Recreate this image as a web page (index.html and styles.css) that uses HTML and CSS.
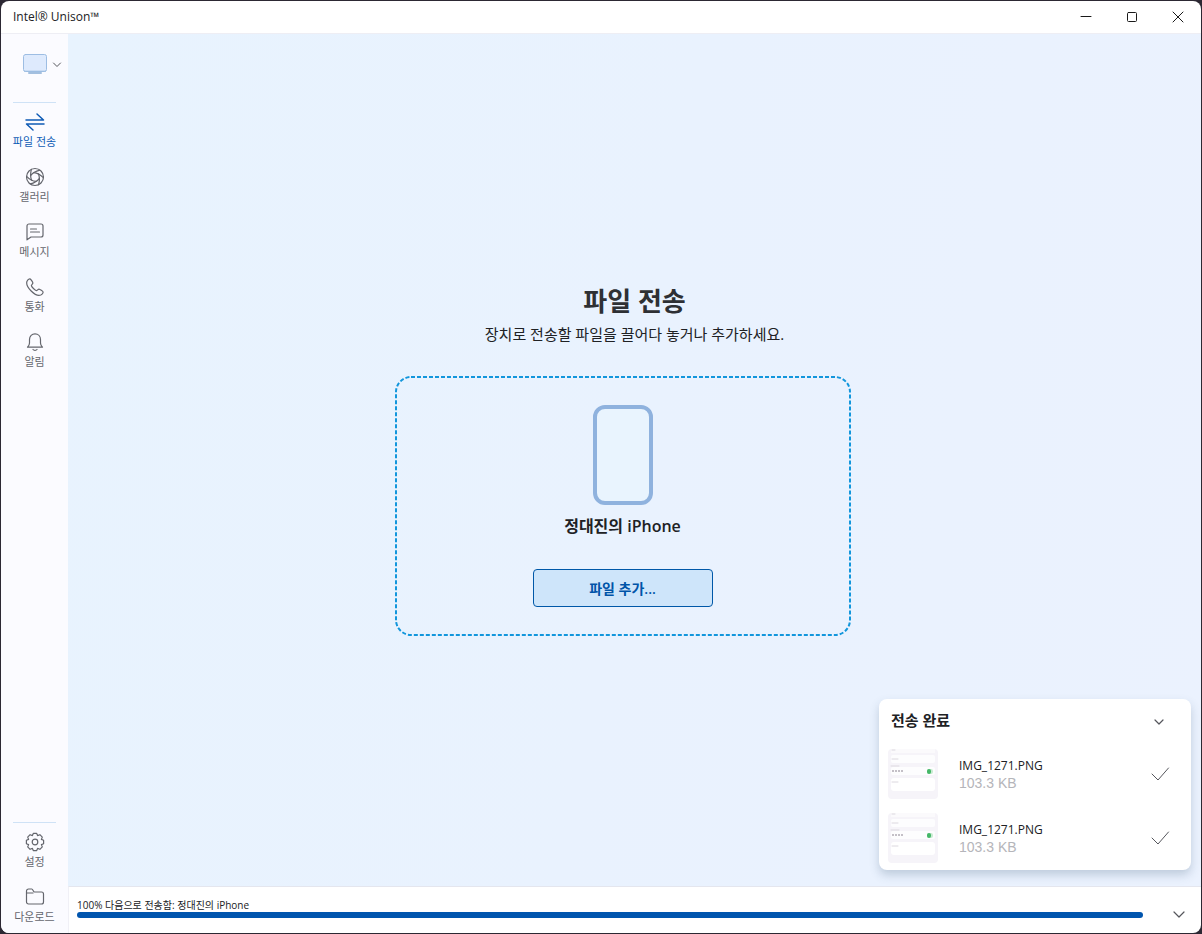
FILE: index.html
```html
<!DOCTYPE html>
<html lang="ko">
<head>
<meta charset="utf-8">
<title>Intel® Unison™</title>
<link rel="stylesheet" href="styles.css">
</head>
<body>
<div class="window">
  <header class="titlebar">
    <span class="app-name">Intel® Unison™</span>
    <div class="caption-buttons">
      <button class="caption" aria-label="최소화"><svg width="12" height="12" viewBox="0 0 12 12"><path d="M1 5.5h10"/></svg></button>
      <button class="caption" aria-label="최대화"><svg width="12" height="12" viewBox="0 0 12 12"><rect x="1.5" y="1.500" width="9" height="9" rx="1"/></svg></button>
      <button class="caption" aria-label="닫기"><svg width="12" height="12" viewBox="0 0 12 12"><path d="M1 1l10 10M11 1L1 11"/></svg></button>
    </div>
  </header>
  <div class="body">
    <nav class="sidebar">
      <button class="device" aria-label="장치 선택">
        <svg class="monitor" width="26" height="22" viewBox="0 0 26 22"><path d="M7 20h12" stroke="#a3bfdf" stroke-width="2"/><rect x="1.500" y="1.500" width="23" height="17" rx="2" fill="#deeafd" stroke="#9dbde3"/><path d="M2.500 18.200h21" stroke="#9dbde3"/></svg>
        <svg width="10" height="8" viewBox="0 0 10 8"><path d="M1.500 3L5 6.500 8.500 3"/></svg>
      </button>
      <ul class="nav-list">
        <li><button class="nav-item active"><svg width="20" height="20" viewBox="0 0 20 20"><path d="M1 8h17.500L12 2M19 12H1.500L8 18"/></svg>파일 전송</button></li>
        <li><button class="nav-item"><svg width="20" height="20" viewBox="0 0 20 20"><circle cx="10" cy="10" r="8.500"/><path d="M5.600 8.700Q8.500 4.600 14.800 3.100"/><path d="M5.600 8.700Q8.500 4.600 14.800 3.100" transform="rotate(60 10 10)"/><path d="M5.600 8.700Q8.500 4.600 14.800 3.100" transform="rotate(120 10 10)"/><path d="M5.600 8.700Q8.500 4.600 14.800 3.100" transform="rotate(180 10 10)"/><path d="M5.600 8.700Q8.500 4.600 14.800 3.100" transform="rotate(240 10 10)"/><path d="M5.600 8.700Q8.500 4.600 14.800 3.100" transform="rotate(300 10 10)"/></svg>갤러리</button></li>
        <li><button class="nav-item"><svg width="20" height="20" viewBox="0 0 20 20"><path d="M4 2h12a2 2 0 0 1 2 2v9a2 2 0 0 1-2 2H6l-4 2.800V4a2 2 0 0 1 2-2zM5.500 7h6M5.500 10h9"/></svg>메시지</button></li>
        <li><button class="nav-item"><svg width="20" height="20" viewBox="0 0 20 20"><path d="M2 4.200C2.600 2.900 3.900 1.800 5 1.900c.7.100 2.800 3.300 2.900 4.100.1.900-1.600 1.800-1.500 2.600.2 1.300 3.600 4.800 5 5 .8.100 1.700-1.600 2.600-1.500.8.100 4 2.200 4.100 2.900.1 1.100-1.100 2.400-2.300 3C10.500 20.200 0 9.700 2 4.200z"/></svg>통화</button></li>
        <li><button class="nav-item"><svg width="20" height="20" viewBox="0 0 20 20"><path d="M2.500 15.200c1.300-1.200 2-2.200 2-4.200V7.500C4.500 4 7 1.800 10 1.800s5.500 2.200 5.500 5.700V11c0 2 .7 3 2 4.200zM8 17.500c.8 1.100 3.200 1.100 4 0"/></svg>알림</button></li>
      </ul>
      <ul class="nav-list bottom">
        <li><button class="nav-item"><svg width="20" height="20" viewBox="0 0 20 20"><path d="M18.600 8.300V11.700L16.400 12.600 17.300 14.900 14.900 17.300 12.600 16.400 11.700 18.600H8.300L7.400 16.400 5.100 17.300 2.700 14.900 3.600 12.600 1.400 11.700V8.300L3.600 7.400 2.700 5.100 5.100 2.700 7.400 3.600 8.300 1.400H11.700L12.600 3.600 14.900 2.700 17.300 5.100 16.400 7.400z"/><circle cx="10" cy="10" r="2.800"/></svg>설정</button></li>
        <li><button class="nav-item"><svg width="20" height="20" viewBox="0 0 20 20"><path d="M1.500 15V4a2 2 0 0 1 2-2h3.200c1.500 0 1.300 3 3 3h6.800a2 2 0 0 1 2 2v8a2 2 0 0 1-2 2h-13a2 2 0 0 1-2-2zM1.500 6h6.500"/></svg>다운로드</button></li>
      </ul>
    </nav>
    <div class="content">
      <main class="stage">
        <h1>파일 전송</h1>
        <p class="hint">장치로 전송할 파일을 끌어다 놓거나 추가하세요.</p>
        <section class="dropzone">
          <svg class="outline"><rect x="1" y="1" rx="15"/></svg>
          <div class="phone"></div>
          <h2>정대진의 iPhone</h2>
          <button class="add">파일 추가...</button>
        </section>
        <aside class="panel">
          <div class="panel-head">
            <h3>전송 완료</h3>
            <button class="fold" aria-label="접기"><svg width="10" height="8" viewBox="0 0 10 8"><path d="M1 3l4 4 4-4"/></svg></button>
          </div>
          <ul class="files">
            <li class="file">
              <svg class="thumb" width="50" height="50" viewBox="0 0 50 50"><rect width="50" height="50" rx="4" fill="#f6f4f9"/><path d="M3 0h44v4H3z" fill="#fbfafc"/><rect x="3" y="6" width="44" height="8" rx="2" fill="#fdfdfe"/><rect x="3" y="18" width="44" height="8" rx="2" fill="#fdfdfe"/><rect x="3" y="29" width="44" height="13" rx="3" fill="#fff"/><path d="M4 1h3M4 10h6M3 17h8M4 33h6" stroke="#dcd8df"/><path d="M4 22h11" stroke="#c4c0c7" stroke-linecap="butt" stroke-dasharray="2 1" stroke-width="2"/><rect x="39" y="20" width="6" height="5" rx="2" fill="#c9ebd2"/><rect x="39" y="20" width="4" height="5" rx="2" fill="#45b768"/></svg>
              <div class="meta"><span class="name">IMG_1271.PNG</span><span class="size">103.3 KB</span></div>
              <svg class="check" width="20" height="16" viewBox="0 0 20 16"><path d="M2 8l6 6L18.500 2"/></svg>
            </li>
            <li class="file">
              <svg class="thumb" width="50" height="50" viewBox="0 0 50 50"><rect width="50" height="50" rx="4" fill="#f6f4f9"/><path d="M3 0h44v4H3z" fill="#fbfafc"/><rect x="3" y="6" width="44" height="8" rx="2" fill="#fdfdfe"/><rect x="3" y="18" width="44" height="8" rx="2" fill="#fdfdfe"/><rect x="3" y="29" width="44" height="13" rx="3" fill="#fff"/><path d="M4 1h3M4 10h6M3 17h8M4 33h6" stroke="#dcd8df"/><path d="M4 22h11" stroke="#c4c0c7" stroke-linecap="butt" stroke-dasharray="2 1" stroke-width="2"/><rect x="39" y="20" width="6" height="5" rx="2" fill="#c9ebd2"/><rect x="39" y="20" width="4" height="5" rx="2" fill="#45b768"/></svg>
              <div class="meta"><span class="name">IMG_1271.PNG</span><span class="size">103.3 KB</span></div>
              <svg class="check" width="20" height="16" viewBox="0 0 20 16"><path d="M2 8l6 6L18.500 2"/></svg>
            </li>
          </ul>
        </aside>
      </main>
      <footer class="status">
        <div class="status-main">
          <label for="transfer">100% 다음으로 전송함: 정대진의 iPhone</label>
          <progress id="transfer" max="100" value="100"></progress>
        </div>
        <button class="fold" aria-label="상태 표시줄 접기"><svg width="12" height="8" viewBox="0 0 12 8"><path d="M1 2l5 5 5-5"/></svg></button>
      </footer>
    </div>
  </div>
</div>
</body>
</html>
```
FILE: styles.css
```css
* { box-sizing: border-box; }

body {
  margin: 0;
  padding: 1px;
  height: 100vh;
  background: #2c2833;
  color: #202124;
  font-family: "Open Sans", "Noto Sans CJK KR", sans-serif;
}

h1, h2, h3, p, ul { margin: 0; padding: 0; }
ul { list-style: none; }

button {
  margin: 0;
  padding: 0;
  border: 0;
  background: none;
  color: inherit;
  font-family: inherit;
}

svg { display: block; fill: none; stroke-linecap: round; stroke-linejoin: round; }

.window {
  display: flex;
  flex-direction: column;
  height: 100%;
  overflow: hidden;
  border-radius: 8px;
  background: #fff;
}

.titlebar {
  display: flex;
  flex: none;
  align-items: center;
  justify-content: space-between;
  height: 33px;
  padding-left: 12px;
  border-bottom: 1px solid #eeeef4;
}

.app-name { font-size: 12px; line-height: 16px; }
.caption-buttons { display: flex; }
.caption { display: grid; place-items: center; width: 46px; height: 32px; }
.caption svg { stroke: #1a1a1a; }

.body { display: flex; flex: 1; min-height: 0; }

.sidebar {
  display: flex;
  flex: none;
  flex-direction: column;
  width: 67px;
  padding: 0 12px;
  background: #fbfbff;
}

.device {
  display: flex;
  align-items: center;
  justify-content: space-between;
  width: 40px;
  height: 60px;
  margin: 0 0 8px 9px;
}
.device svg { flex: none; stroke: #55565c; }

.nav-list { border-top: 1px solid #cfe2f6; }
.bottom { margin-top: auto; }

.nav-item {
  display: flex;
  flex-direction: column;
  align-items: center;
  gap: 2px;
  width: 100%;
  height: 55px;
  padding-top: 9px;
  color: #64666d;
  font-size: 11px;
  line-height: 16px;
  white-space: nowrap;
}
.nav-item svg { stroke: currentColor; stroke-width: 1.2; }
.nav-item.active { color: #0f5bb5; }
.active svg { stroke-width: 1.5; }

.content { display: flex; flex: 1; flex-direction: column; min-width: 0; }

.stage {
  position: relative;
  display: flex;
  flex: 1;
  flex-direction: column;
  align-items: center;
  justify-content: center;
  padding-bottom: 2px;
  background: linear-gradient(100deg, #e8f3fe 0%, #e9f2fe 50%, #ebf2fe 100%);
}

h1 { color: #2e3034; font-size: 26px; line-height: 36px; }
.hint { margin-top: 4px; font-size: 15px; line-height: 22px; }

.dropzone {
  position: relative;
  display: flex;
  flex-direction: column;
  align-items: center;
  width: 456px;
  margin: 31px 24px 0 0;
  padding: 29px 0;
}

.outline { position: absolute; inset: 0; width: 100%; height: 100%; }
.outline rect {
  width: calc(100% - 2px);
  height: calc(100% - 2px);
  stroke: #1296dc;
  stroke-width: 2;
  stroke-dasharray: 4 2;
  stroke-linecap: butt;
}

.phone {
  width: 60px;
  height: 100px;
  border: 4px solid #8fb2de;
  border-radius: 12px;
  background: #e9f4fe;
}

h2 { margin-top: 9px; font-size: 16px; font-weight: 600; line-height: 24px; }

.add {
  width: 180px;
  height: 38px;
  margin-top: 31px;
  border: 1px solid #0058a8;
  border-radius: 4px;
  background: #cee5fa;
  color: #0054a8;
  font-size: 14px;
  font-weight: 600;
}

.panel {
  position: absolute;
  right: 10px;
  bottom: 16px;
  width: 312px;
  padding: 8px 9px 0;
  border-radius: 8px;
  background: #fff;
  box-shadow: 0 5px 10px rgba(60, 90, 120, 0.25);
}

.panel-head { display: flex; align-items: center; justify-content: space-between; padding: 0 13px 0 3px; }
h3 { font-size: 15px; font-weight: 600; line-height: 27px; }
.fold { display: grid; place-items: center; width: 20px; height: 20px; }
.fold svg { stroke: #55565c; stroke-width: 1.2; }

.file { display: flex; align-items: center; height: 64px; padding-right: 12px; }
.files { padding-top: 8px; }
.meta { display: flex; flex: 1; flex-direction: column; padding-left: 21px; }
.name { font-size: 12px; line-height: 18px; }
.size { color: #b5b5ba; font-family: "Liberation Sans", sans-serif; font-size: 14px; line-height: 17px; }
.check { stroke: #55565c; }

.status {
  display: flex;
  flex: none;
  align-items: center;
  gap: 26px;
  height: 47px;
  padding: 8px 12px 0 8px;
  border-top: 1px solid #e4e6ee;
  border-left: 1px solid #f0f0f6;
}
.status-main { display: flex; flex: 1; flex-direction: column; padding-bottom: 11px; }
.status label { font-size: 10px; line-height: 13px; }

progress {
  appearance: none;
  width: 100%;
  height: 6px;
  border: 0;
  border-radius: 3px;
  overflow: hidden;
}
progress::-webkit-progress-bar { background: #d9e6f5; }
progress::-webkit-progress-value { background: #0055ae; }
```
